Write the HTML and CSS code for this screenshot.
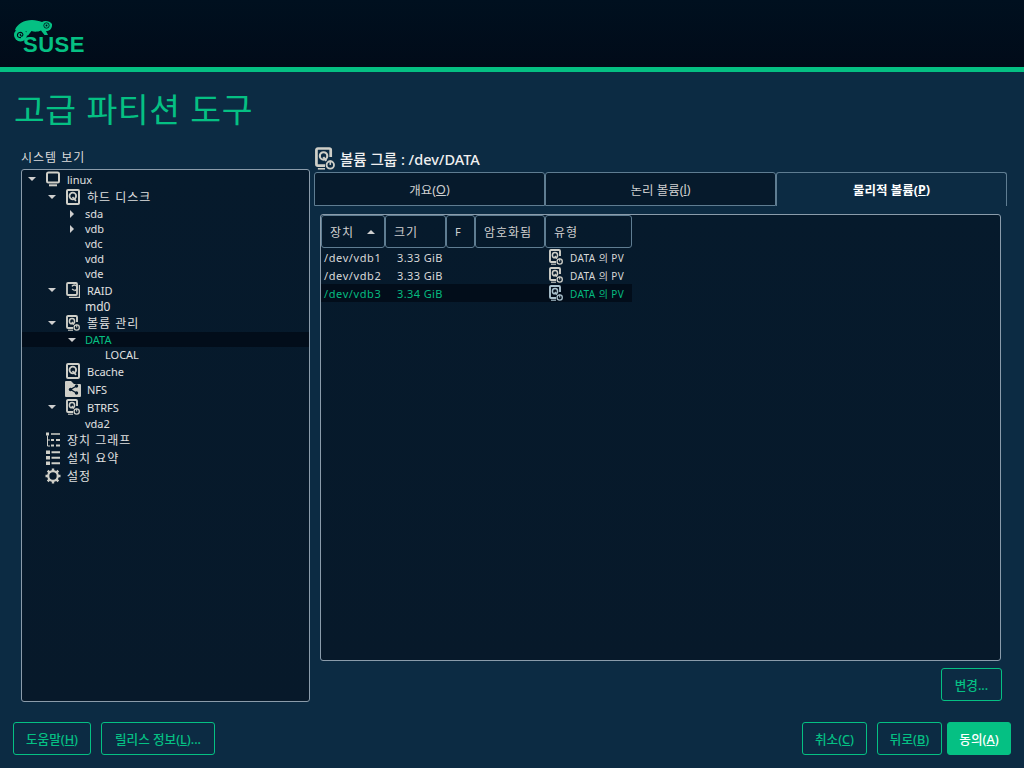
FILE: index.html
```html
<!DOCTYPE html>
<html lang="ko">
<head>
  <meta charset="UTF-8" />
  <title>고급 파티션 도구</title>
  <link rel="stylesheet" href="styles.css">
</head>
<body>
  <svg class="defs" width="0" height="0">
    <symbol id="i-disk" viewBox="0 0 14 16">
      <rect x="1" y="1" width="12" height="14" rx="1" fill="none" stroke="currentColor" stroke-width="2"/>
      <circle cx="6.800" cy="7" r="3.300" fill="none" stroke="currentColor" stroke-width="1.800"/>
      <path d="M6.500 8l3.500 3.800" stroke="currentColor" stroke-width="1.700"/>
    </symbol>
    <symbol id="i-raid" viewBox="0 0 14 16">
      <rect x="1" y="1" width="10" height="12" rx="1" fill="none" stroke="currentColor" stroke-width="1.800"/>
      <path d="M13.400 3v12.400H3" fill="none" stroke="currentColor" stroke-width="1.200"/>
      <path d="M8.500 8.500A2.800 2.800 0 1 0 6 4.300" fill="none" stroke="currentColor" stroke-width="1.500"/>
      <path d="M6 7l2.500 1.500" stroke="currentColor" stroke-width="1.200"/>
    </symbol>
    <symbol id="i-lvm" viewBox="0 0 14 16">
      <path d="M7 13H2a1 1 0 0 1-1-1V2a1 1 0 0 1 1-1h8a1 1 0 0 1 1 1v5" fill="none" stroke="currentColor" stroke-width="1.900"/>
      <path d="M2 15.200h5" stroke="currentColor" stroke-width="1.100"/>
      <circle cx="6" cy="6.200" r="2.600" fill="none" stroke="currentColor" stroke-width="1.500"/>
      <path d="M5.800 7l2.200 2.600" stroke="currentColor" stroke-width="1.500"/>
      <circle cx="10.700" cy="12.500" r="2.600" fill="none" stroke="currentColor" stroke-width="1.300"/>
      <path d="M10.700 12.500V9.400" stroke="currentColor" stroke-width="1.100"/>
    </symbol>
    <symbol id="i-nfs" viewBox="0 0 16 16">
      <path d="M0 1a1 1 0 0 1 1-1h5l3 3h6a1 1 0 0 1 1 1v11a1 1 0 0 1-1 1H1a1 1 0 0 1-1-1z" fill="currentColor"/>
      <path d="M11.500 5L5.500 8.500l6 3.500" fill="none" stroke="#061a2c" stroke-width="1.300"/>
      <circle cx="11.500" cy="5" r="1.700" fill="#061a2c"/>
      <circle cx="5.500" cy="8.500" r="1.700" fill="#061a2c"/>
      <circle cx="11.500" cy="12" r="1.700" fill="#061a2c"/>
    </symbol>
    <symbol id="i-monitor" viewBox="0 0 14 15">
      <rect x="1" y="1" width="12" height="10" rx="1.500" fill="none" stroke="currentColor" stroke-width="2"/>
      <path d="M3 13.800h8" stroke="currentColor" stroke-width="2"/>
    </symbol>
    <symbol id="i-graph" viewBox="0 0 14 15">
      <path d="M0 0h3v3H0zM5 .800h9v1.500H5zM5 6.500h3v2H5zM10 6.500h4v2h-4zM5 12h3v2H5zM10 12h4v2h-4z" fill="currentColor"/>
      <path d="M1.500 3v10.500H4M1.500 7.500H4" fill="none" stroke="currentColor" stroke-width="1"/>
    </symbol>
    <symbol id="i-list" viewBox="0 0 14 15">
      <path d="M0 0h4v3.600H0zM0 5.500h4v3.600H0zM0 11h4v3.600H0zM5.500 .800H14v2H5.500zM5.500 6.300H14v2H5.500zM5.500 11.800H14v2H5.500z" fill="currentColor"/>
    </symbol>
    <symbol id="i-gear" viewBox="0 0 16 16">
      <circle cx="8" cy="8" r="4.800" fill="none" stroke="currentColor" stroke-width="2.200"/>
      <path d="M8 .500v3M8 12.500v3M.500 8h3M12.500 8h3M2.700 2.700l2.100 2.100M11.200 11.200l2.100 2.100M2.700 13.300l2.100-2.100M11.200 4.800l2.100-2.100" stroke="currentColor" stroke-width="2.400"/>
    </symbol>
  </svg>

  <header class="topbar">
    <div class="logo">
      <svg class="chameleon" width="38" height="23" viewBox="0 0 38 23">
        <path d="M1 10C3 4 10 0 18 0c4 0 7 1 10 2 3-2 8-1 10 2 .5 4-2 7-6 7l2 4h-3.500L27 10.500c-3 1.500-7 1.500-9.500.5L14 15.500h-2.500l1-4.500c-2 0-4 .5-5.500 1.500z" fill="#05c083"/>
        <circle cx="6.500" cy="15" r="6.500" fill="#05c083"/>
        <path d="M7 17.500c-2.500.5-4-1-3.500-3 .5-2 3.500-3 5-1 1 1.500 0 3-1.500 2.500-1-.5-1-1.500-.2-2" fill="none" stroke="#010b19" stroke-width="1.100"/>
        <circle cx="32.500" cy="5.500" r="2.700" fill="none" stroke="#010b19" stroke-width=".8"/>
        <circle cx="32.500" cy="5.500" r=".9" fill="#010b19"/>
      </svg>
      <span class="logo-text">SUSE</span>
    </div>
  </header>

  <h1 class="title">고급 파티션 도구</h1>

  <main class="content">
    <section class="left">
      <div class="left-label">시스템 보기</div>
      <div class="tree">
        <div class="row icon-row lvl0"><i class="arrow open"></i><svg class="ico"><use href="#i-monitor"/></svg><span>linux</span></div>
        <div class="row icon-row lvl1"><i class="arrow open"></i><svg class="ico"><use href="#i-disk"/></svg><span class="ko">하드 디스크</span></div>
        <div class="row lvl2"><i class="arrow closed"></i><span>sda</span></div>
        <div class="row lvl2"><i class="arrow closed"></i><span>vdb</span></div>
        <div class="row lvl2"><i class="arrow"></i><span>vdc</span></div>
        <div class="row lvl2"><i class="arrow"></i><span>vdd</span></div>
        <div class="row lvl2"><i class="arrow"></i><span>vde</span></div>
        <div class="row icon-row lvl1"><i class="arrow open"></i><svg class="ico"><use href="#i-raid"/></svg><span>RAID</span></div>
        <div class="row lvl2"><i class="arrow"></i><span class="big">md0</span></div>
        <div class="row icon-row lvl1"><i class="arrow open"></i><svg class="ico"><use href="#i-lvm"/></svg><span class="ko">볼륨 관리</span></div>
        <div class="row lvl2 selected"><i class="arrow open"></i><span>DATA</span></div>
        <div class="row lvl3"><span>LOCAL</span></div>
        <div class="row icon-row lvl1"><i class="arrow"></i><svg class="ico"><use href="#i-disk"/></svg><span>Bcache</span></div>
        <div class="row icon-row lvl1"><i class="arrow"></i><svg class="ico ico-wide"><use href="#i-nfs"/></svg><span>NFS</span></div>
        <div class="row icon-row lvl1"><i class="arrow open"></i><svg class="ico"><use href="#i-lvm"/></svg><span>BTRFS</span></div>
        <div class="row lvl2"><i class="arrow"></i><span>vda2</span></div>
        <div class="row icon-row lvl0"><i class="arrow"></i><svg class="ico"><use href="#i-graph"/></svg><span class="ko">장치 그래프</span></div>
        <div class="row icon-row lvl0"><i class="arrow"></i><svg class="ico"><use href="#i-list"/></svg><span class="ko">설치 요약</span></div>
        <div class="row icon-row lvl0"><i class="arrow"></i><svg class="ico ico-wide"><use href="#i-gear"/></svg><span class="ko">설정</span></div>
      </div>
    </section>

    <section class="main-col">
      <div class="heading"><svg class="heading-ico"><use href="#i-lvm"/></svg><span>볼륨 그룹 : /dev/DATA</span></div>
      <div class="tabs">
        <div class="tab">개요(<u>O</u>)</div>
        <div class="tab">논리 볼륨(<u>l</u>)</div>
        <div class="tab active">물리적 볼륨(<u>P</u>)</div>
      </div>
      <div class="panel">
        <div class="table">
          <div class="thead">
            <div class="th c1">장치<i class="sort"></i></div>
            <div class="th c2">크기</div>
            <div class="th c3">F</div>
            <div class="th c4">암호화됨</div>
            <div class="th c5">유형</div>
          </div>
          <div class="tr"><span class="c1">/dev/vdb1</span><span class="c2">3.33 GiB</span><span class="c3"></span><span class="c4"></span><span class="c5"><svg class="ico"><use href="#i-lvm"/></svg>DATA 의 PV</span></div>
          <div class="tr"><span class="c1">/dev/vdb2</span><span class="c2">3.33 GiB</span><span class="c3"></span><span class="c4"></span><span class="c5"><svg class="ico"><use href="#i-lvm"/></svg>DATA 의 PV</span></div>
          <div class="tr selected"><span class="c1">/dev/vdb3</span><span class="c2">3.34 GiB</span><span class="c3"></span><span class="c4"></span><span class="c5"><svg class="ico ico-pale"><use href="#i-lvm"/></svg>DATA 의 PV</span></div>
        </div>
      </div>
      <div class="panel-actions"><button class="btn">변경...</button></div>
    </section>
  </main>

  <footer class="buttons">
    <button class="btn b-help">도움말(<u>H</u>)</button>
    <button class="btn b-notes">릴리스 정보(<u>L</u>)...</button>
    <span class="spacer"></span>
    <button class="btn b-cancel">취소(<u>C</u>)</button>
    <button class="btn b-back">뒤로(<u>B</u>)</button>
    <button class="btn primary">동의(<u>A</u>)</button>
  </footer>
</body>
</html>
```

FILE: styles.css
```css
* {
  box-sizing: border-box;
}
html, body {
  margin: 0;
  height: 768px;
  overflow: hidden;
}
body {
  font-family: "Noto Sans", "Noto Sans CJK KR", sans-serif;
  font-size: 11px;
  color: #e0e0e0;
  background: #0c2b43;
}
.defs {
  position: absolute;
}

/* top bar */
.topbar {
  height: 72px;
  border-bottom: 5px solid #05c083;
  background: linear-gradient(#00101f, #010b19);
  padding: 20px 0 0 14px;
}
.logo {
  position: relative;
  width: 72px;
  height: 33px;
}
.logo-text {
  position: absolute;
  left: 9px;
  top: 13px;
  font-family: "Liberation Sans", sans-serif;
  font-size: 22px;
  line-height: 23px;
  font-weight: 700;
  letter-spacing: 0.5px;
  color: #05c083;
}
.chameleon {
  position: absolute;
  left: 0;
  top: 0;
}
.title {
  margin: 0;
  height: 76px;
  padding: 15px 0 0 14px;
  font-family: "Noto Sans CJK KR", sans-serif;
  font-size: 33.5px;
  line-height: 42px;
  font-weight: 400;
  letter-spacing: 0.5px;
  color: #05c083;
}

/* layout */
.content {
  display: flex;
  gap: 4px;
  height: 554px;
  padding: 0 17px 0 21px;
}
.left {
  width: 289px;
}
.left-label {
  height: 21px;
  font-size: 12px;
  letter-spacing: 1px;
  line-height: 20px;
  color: #dcdcdc;
}
.tree {
  height: 533px;
  border: 1px solid #8b9cab;
  border-radius: 3px;
  background: linear-gradient(#061a2c, #07192a);
}
.row {
  display: flex;
  align-items: center;
  height: 15px;
  white-space: nowrap;
}
.icon-row {
  height: 18px;
}
.ko {
  font-size: 12px;
  letter-spacing: 1px;
}
.lvl0 {
  padding-left: 5px;
}
.lvl1 {
  padding-left: 25px;
}
.lvl2 {
  padding-left: 44px;
}
.lvl3 {
  padding-left: 83px;
}
.row.selected {
  background: #020d1a;
  color: #05c083;
}
.big {
  font-size: 12px;
}
.arrow {
  display: block;
  flex: none;
  width: 19px;
  height: 10px;
  position: relative;
}
.arrow.open::before {
  content: "";
  position: absolute;
  left: 1px;
  top: 3px;
  border-left: 4px solid transparent;
  border-right: 4px solid transparent;
  border-top: 4px solid #cfcfcf;
}
.lvl2 .arrow.open::before {
  left: 2px;
}
.arrow.closed::before {
  content: "";
  position: absolute;
  left: 4px;
  top: 1px;
  border-top: 4px solid transparent;
  border-bottom: 4px solid transparent;
  border-left: 4px solid #cfcfcf;
}
.ico {
  flex: none;
  width: 14px;
  height: 16px;
  margin-right: 7px;
  color: #cfcfc8;
}
.ico-wide {
  width: 16px;
  margin-left: -1px;
  margin-right: 6px;
}
.ico-pale {
  color: #a9c0cc;
}

/* right side */
.main-col {
  width: 693px;
}
.heading {
  display: flex;
  align-items: center;
  height: 24px;
  padding: 0 0 3px 1px;
  font-size: 14.5px;
  font-weight: 500;
  color: #f0f0f0;
}
.heading-ico {
  width: 20px;
  height: 23px;
  margin-right: 5px;
  color: #cfcfc8;
}
.tabs {
  display: flex;
  height: 34px;
}
.tab {
  width: 231px;
  display: flex;
  align-items: center;
  justify-content: center;
  font-size: 12.5px;
  color: #d0d0d0;
  background: #061a2c;
  border: 1px solid #5f7d92;
  border-radius: 3px 3px 0 0;
}
.tab.active {
  background: none;
  border-bottom: none;
  color: #fff;
  font-weight: 700;
}
.panel {
  height: 447px;
  margin: 8px 6px 0;
  border: 1px solid #8b9cab;
  border-radius: 3px;
  background: linear-gradient(#061a2c, #07192a);
}
.panel-actions {
  display: flex;
  justify-content: flex-end;
  margin: 7px 5px 0 0;
}

/* table */
.table {
  width: 311px;
}
.thead {
  display: flex;
  height: 33px;
}
.th {
  display: flex;
  align-items: center;
  padding-left: 8px;
  font-size: 12px;
  letter-spacing: 1px;
  color: #d0d0d0;
  border: 1px solid #5f7d92;
  border-radius: 3px;
}
.th.c3 {
  font-size: 11px;
}
.c1 {
  width: 64px;
  flex: none;
}
.c2 {
  width: 61px;
  flex: none;
}
.c3 {
  width: 29px;
  flex: none;
}
.c4 {
  width: 70px;
  flex: none;
}
.c5 {
  width: 87px;
  flex: none;
}
.sort {
  margin-left: 13px;
  border-left: 4px solid transparent;
  border-right: 4px solid transparent;
  border-bottom: 4px solid #cfcfcf;
}
.tr {
  display: flex;
  align-items: center;
  height: 18px;
  white-space: nowrap;
  color: #d8d8d8;
  letter-spacing: 0.4px;
}
.tr .c1 {
  padding-left: 3px;
  width: 76px;
  letter-spacing: 0.6px;
}
.tr .c2 {
  width: 49px;
}
.tr .c5 {
  display: flex;
  align-items: center;
  padding-left: 4px;
  font-size: 10px;
}
.tr.selected {
  background: #020d1a;
  color: #05bb80;
}

/* buttons */
.btn {
  height: 33px;
  padding: 0;
  font: 500 12.6px "Noto Sans", "Noto Sans CJK KR", sans-serif;
  color: #05c083;
  background: none;
  border: 1px solid #05c083;
  border-radius: 3px;
  width: 61px;
}
.btn u {
  text-underline-offset: 1px;
}
.buttons {
  display: flex;
  gap: 10px;
  margin-top: 20px;
  padding: 0 13px;
}
.spacer {
  flex: 1;
}
.b-help {
  width: 78px;
}
.b-notes {
  width: 114px;
}
.b-cancel {
  width: 65px;
}
.b-back {
  width: 65px;
}
.primary {
  width: 64px;
  margin-left: -5px;
  color: #fff;
  background: #05c083;
}
```
